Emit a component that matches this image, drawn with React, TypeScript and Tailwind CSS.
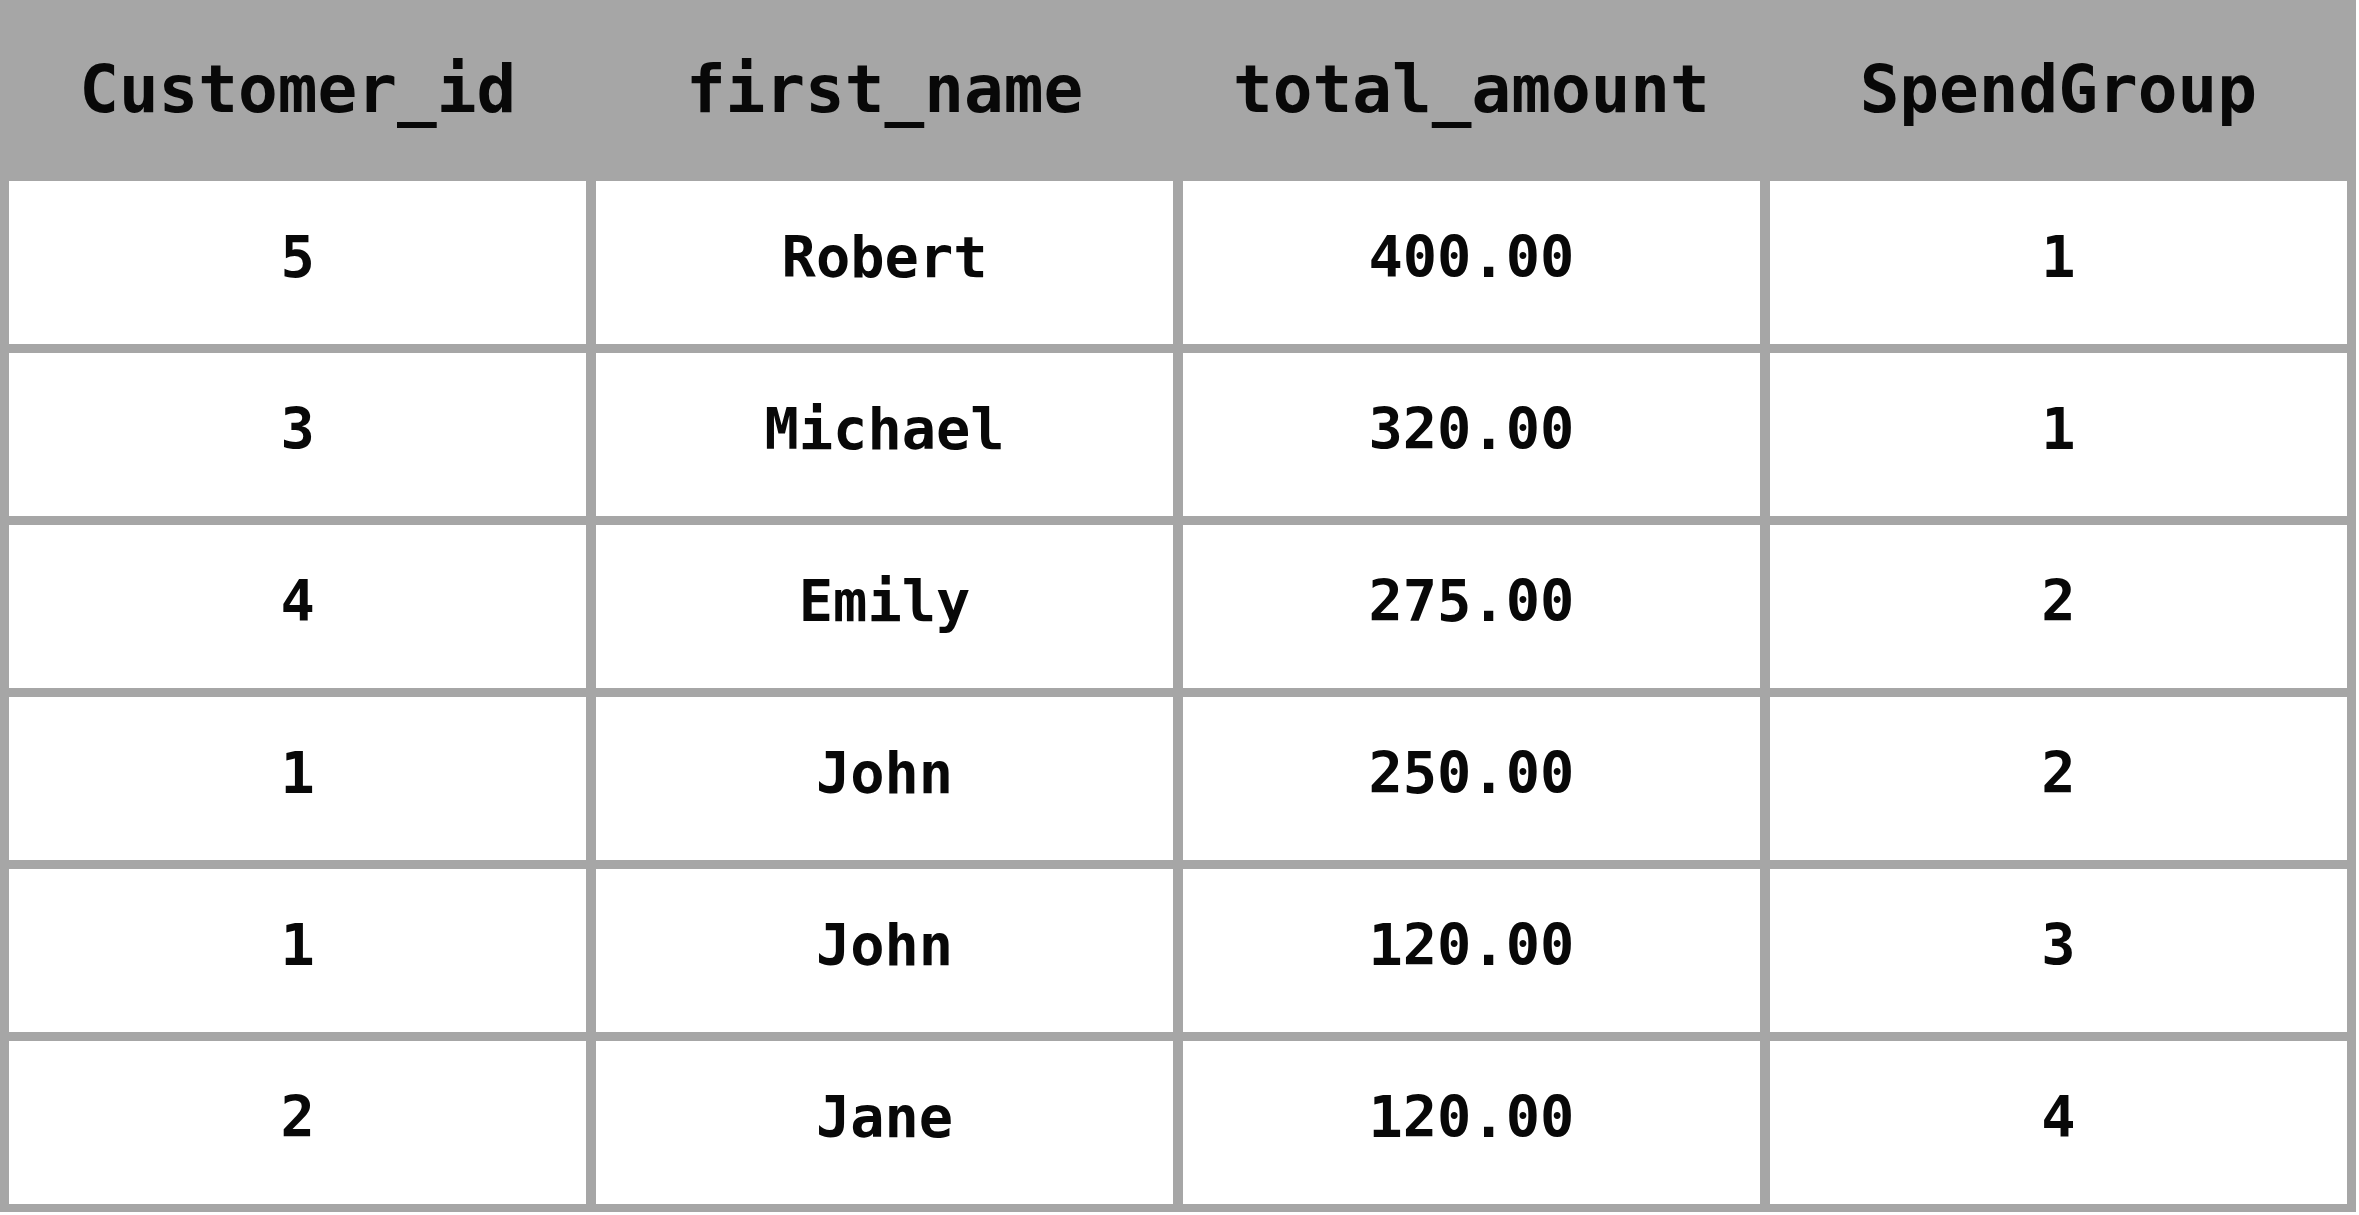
const columns = ['Customer_id', 'first_name', 'total_amount', 'SpendGroup']

const rows = [
  ['5', 'Robert', '400.00', '1'],
  ['3', 'Michael', '320.00', '1'],
  ['4', 'Emily', '275.00', '2'],
  ['1', 'John', '250.00', '2'],
  ['1', 'John', '120.00', '3'],
  ['2', 'Jane', '120.00', '4'],
]

export default function App() {
  return (
    <div className="w-[2359px] h-[1215px] bg-white">
      <div className="w-[2356px] h-[1212px] bg-[#a6a6a6] px-[9px] font-['DejaVu_Sans_Mono',_'Liberation_Mono',_monospace] font-bold text-[#080808]">
        <div className="grid grid-cols-4 gap-x-[9.5px] h-[181px]">
          {columns.map((col) => (
            <div key={col} className="flex items-center justify-center text-[66px] pb-[2px]">
              {col}
            </div>
          ))}
        </div>

        <div className="grid grid-cols-4 gap-x-[9.5px] gap-y-[9.5px]">
          {rows.map((row, i) =>
            row.map((cell, j) => (
              <div
                key={`${i}-${j}`}
                className="h-[162.5px] bg-white flex items-center justify-center text-[57px] pb-[10px]"
              >
                {cell}
              </div>
            ))
          )}
        </div>
      </div>
    </div>
  )
}
